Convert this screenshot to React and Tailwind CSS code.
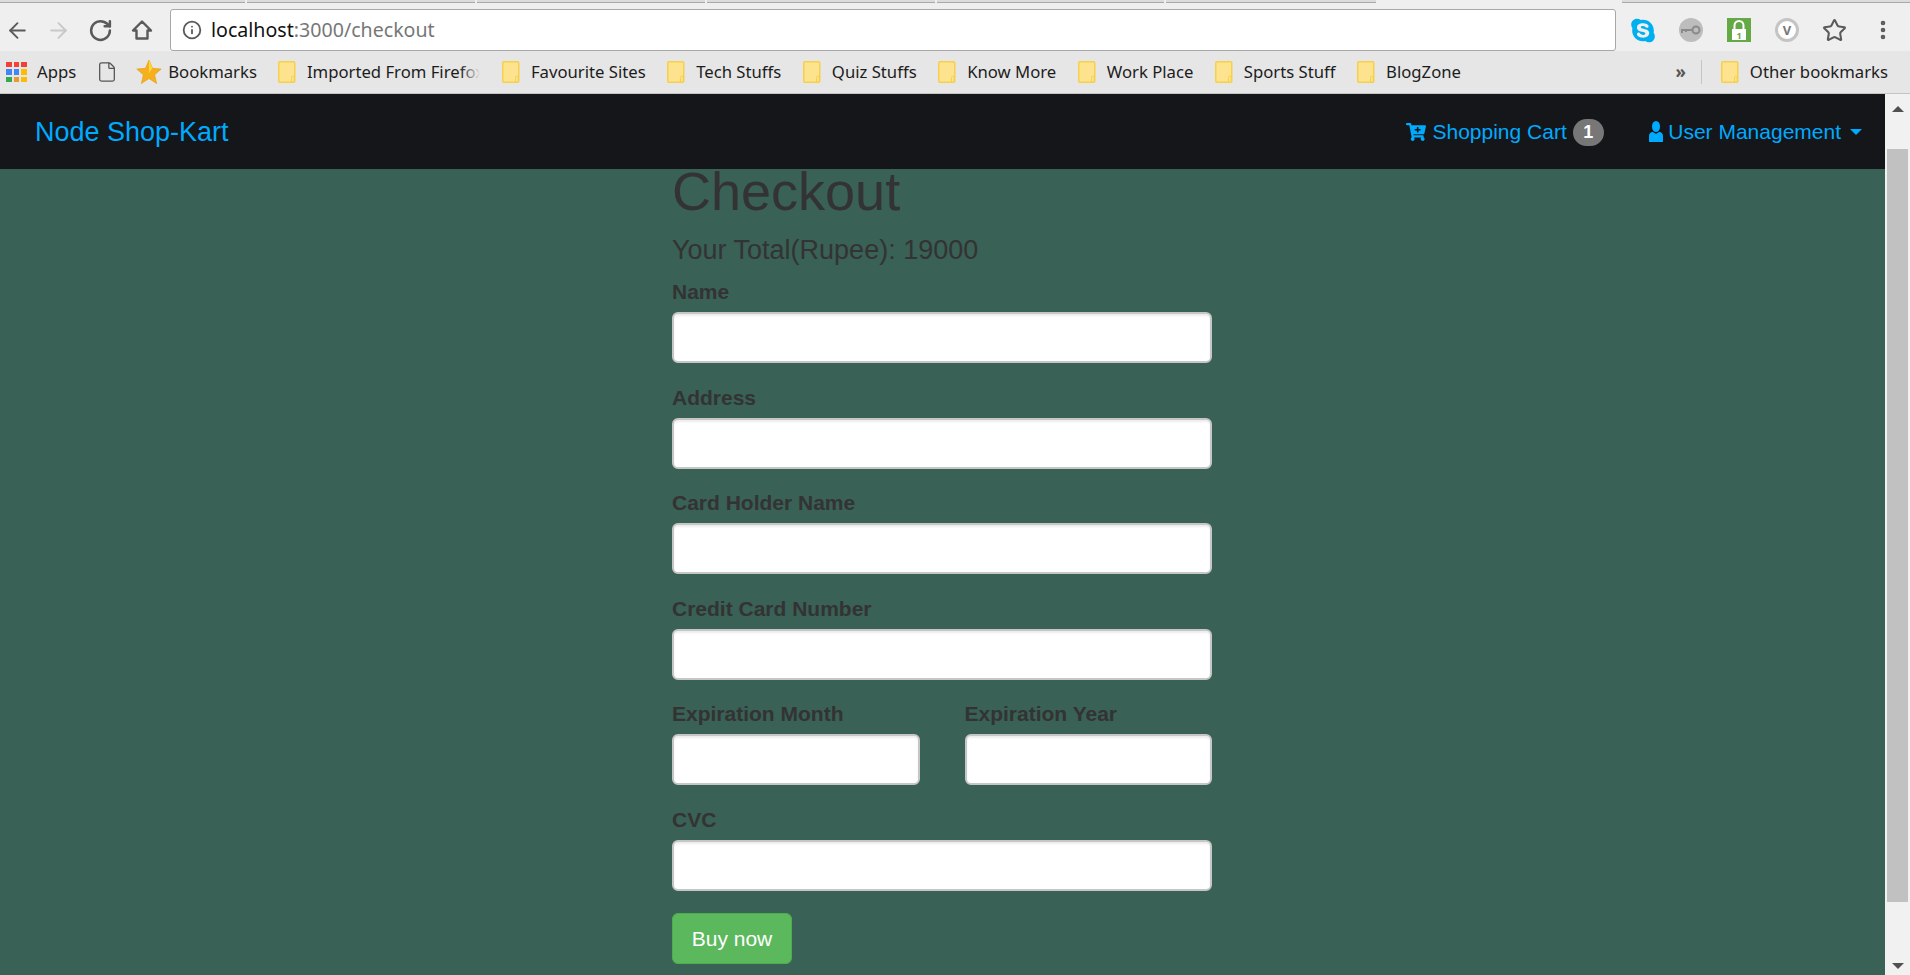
import { ArrowLeft, ArrowRight, RotateCw, Info, File, Star, EllipsisVertical } from 'lucide-react'
import { FaSkype, FaCartPlus } from 'react-icons/fa'

const chromeFont = { fontFamily: "'Noto Sans', sans-serif" }

const carpetas = ['Favourite Sites', 'Tech Stuffs', 'Quiz Stuffs', 'Know More', 'Work Place', 'Sports Stuff', 'BlogZone']

const colores = ['#ef4136', '#f44336', '#ef4136', '#4285f4', '#4285f4', '#fbbc05', '#34a853', '#ea9a2c', '#fbbc05']

function Carpeta() {
  return (
    <svg width="18" height="22" viewBox="0 0 18 22" className="shrink-0">
      <rect x="0.75" y="0.75" width="16" height="20.5" rx="1" fill="#fee38f" stroke="#f6d04d" strokeWidth="1.5" />
      <path d="M13.5 21v-4.5a1.2 1.2 0 0 1 2.6 0V21" fill="none" stroke="#f6d04d" strokeWidth="1" />
    </svg>
  )
}

function Marcador({ nombre }) {
  return (
    <div className="flex items-center gap-[11px]">
      <Carpeta />
      <span className="text-[16.7px] text-[#1c1c1c] whitespace-nowrap">{nombre}</span>
    </div>
  )
}

function Campo({ label, className }) {
  return (
    <div className={className}>
      <label className="block h-[30px] mb-[6px] pt-[1px] text-[21px] leading-[30px] font-bold text-[#333]">{label}</label>
      <input
        type="text"
        className="block w-full h-[51px] mb-[18.5px] bg-white border-2 border-[#c6c6c6] rounded-[6px] shadow-[inset_0_2px_2px_rgba(0,0,0,0.075)] outline-none"
      />
    </div>
  )
}

function BarraNavegador() {
  return (
    <div className="shrink-0 bg-[#e6e6e6]" style={chromeFont}>
      <div className="flex h-[3px] bg-[#efefef]">
        <div className="w-[245px] bg-[#dcdcdc] border-b border-[#a9a9a9]" />
        <div className="w-[2px]" />
        <div className="w-[228px] bg-[#dcdcdc] border-b border-[#a9a9a9]" />
        <div className="w-[2px]" />
        <div className="w-[228px] bg-[#dcdcdc] border-b border-[#a9a9a9]" />
        <div className="w-[2px]" />
        <div className="w-[228px] bg-[#dcdcdc] border-b border-[#a9a9a9]" />
        <div className="w-[2px]" />
        <div className="w-[227px] bg-[#dcdcdc] border-b border-[#a9a9a9]" />
        <div className="w-[2px]" />
        <div className="w-[210px] bg-[#dcdcdc] border-b border-[#a9a9a9]" />
        <div className="w-[246px]" />
        <div className="flex-1 bg-[#dcdcdc] border-b border-[#a9a9a9]" />
      </div>
      <div className="flex items-center h-[48px] pt-[6px] bg-[#efefef]">
        <div className="flex items-center w-[170px] pl-[5px]">
          <ArrowLeft size={25} strokeWidth={1.8} color="#5a5a5a" />
          <ArrowRight size={25} strokeWidth={1.8} color="#c8c8c8" className="ml-[16px]" />
          <RotateCw size={25} strokeWidth={2.4} color="#5a5a5a" className="ml-[17px]" />
          <svg width="24" height="24" viewBox="0 0 24 24" className="ml-[17px]">
            <path d="M12 3.5L3 12.5h3.5V20.5h11V12.5H21z" fill="none" stroke="#5a5a5a" strokeWidth="2.4" strokeLinejoin="round" />
          </svg>
        </div>
        <div className="flex items-center w-[1446px] h-[42px] bg-white border border-[#a8a8a8] rounded-[3px] pl-[11px]">
          <Info size={20} strokeWidth={2.2} color="#5a5a5a" />
          <span className="ml-[9px] text-[19.6px] text-[#111] leading-none">
            localhost<span className="text-[#777]">:3000/checkout</span>
          </span>
        </div>
        <div className="flex items-center flex-1">
          <div className="w-[24px] ml-[15px] flex justify-center">
            <FaSkype size={27} color="#00aff0" />
          </div>
          <div className="ml-[24px] w-[24px] h-[24px] rounded-full bg-[#bdbdbd] flex items-center justify-center">
            <svg width="20" height="10" viewBox="0 0 20 10">
              <circle cx="15" cy="5" r="3.5" fill="none" stroke="#8a8a8a" strokeWidth="2" />
              <path d="M11 5H1v3M5 5v2" fill="none" stroke="#8a8a8a" strokeWidth="2" />
            </svg>
          </div>
          <div className="ml-[24px] w-[24px] h-[24px] bg-[#63a945]">
            <svg width="24" height="24" viewBox="0 0 24 24">
              <path d="M7.5 12V7.5a4.5 4.5 0 0 1 9 0V12" fill="none" stroke="#fff" strokeWidth="2" />
              <rect x="5" y="11" width="14" height="11" fill="#fff" />
              <text x="12" y="20.5" textAnchor="middle" fontSize="9" fontWeight="bold" fill="#63a945">1</text>
            </svg>
          </div>
          <div className="ml-[24px] w-[24px] h-[24px] rounded-full border-[3px] border-[#c4c4c4] bg-white flex items-center justify-center text-[13px] leading-none text-[#777] font-bold">
            V
          </div>
          <Star size={25} strokeWidth={2} color="#5a5a5a" className="ml-[23px]" />
          <EllipsisVertical size={24} strokeWidth={2.6} color="#5a5a5a" className="ml-[24px]" />
        </div>
      </div>
      <div className="flex items-center h-[43px] border-b border-[#c4c4c4]">
        <div className="grid grid-cols-3 gap-[2px] w-[21px] ml-[6px]">
          {colores.map((c, i) => (
            <div key={i} className="h-[5.5px]" style={{ backgroundColor: c }} />
          ))}
        </div>
        <span className="ml-[10px] text-[16.7px] text-[#1c1c1c]">Apps</span>
        <File size={22} strokeWidth={1.4} color="#555" className="ml-[20px]" />
        <svg width="26" height="26" viewBox="0 0 24 24" className="ml-[18px]">
          <path d="M12 1l3.2 7.6 8 .7-6 5.3 1.8 8L12 18l-7 4.6 1.8-8-6-5.3 8-.7z" fill="#f6b01e" stroke="#e59a10" strokeWidth="0.6" />
          <path d="M12 1l3.2 7.6L12 13z" fill="#fdd835" />
        </svg>
        <span className="ml-[6px] text-[16.7px] text-[#1c1c1c]">Bookmarks</span>
        <div className="flex items-center gap-[11px] ml-[21px]">
          <Carpeta />
          <div className="relative w-[173px] overflow-hidden">
            <span className="text-[16.7px] text-[#1c1c1c] whitespace-nowrap">Imported From Firefox</span>
            <div className="absolute inset-y-0 right-0 w-[20px] bg-gradient-to-r from-transparent to-[#e6e6e6]" />
          </div>
        </div>
        <div className="flex items-center gap-[21.5px] ml-[22px]">
          {carpetas.map((c) => (
            <Marcador key={c} nombre={c} />
          ))}
        </div>
        <div className="flex items-center ml-auto">
          <span className="text-[17px] text-[#555] font-bold">»</span>
          <div className="w-px h-[24px] bg-[#c4c4c4] ml-[15px] mr-[19px]" />
          <Marcador nombre="Other bookmarks" />
          <div className="w-[22px]" />
        </div>
      </div>
    </div>
  )
}

function App() {
  return (
    <div className="h-[975px] w-full overflow-hidden flex flex-col">
      <BarraNavegador />
      <div className="flex flex-1 min-h-0" style={{ fontFamily: "'Liberation Sans', Arial, sans-serif" }}>
        <div className="flex-1 min-w-0 bg-[#396156] flex flex-col overflow-hidden">
          <nav className="shrink-0 h-[75px] bg-[#141619] flex items-center justify-between pl-[35px] pr-[23px] text-[#00aaff]">
            <a className="text-[27px] pt-[2px]">Node Shop-Kart</a>
            <div className="flex items-center text-[21px] pt-[1px]">
              <FaCartPlus size={20} />
              <span className="ml-[6px]">Shopping Cart</span>
              <span className="ml-[6px] w-[31px] h-[27px] rounded-full bg-[#777] text-white text-[18px] font-bold flex items-center justify-center">
                1
              </span>
              <svg width="14" height="22" viewBox="0 0 16 22" preserveAspectRatio="none" className="ml-[45px]" fill="#00aaff">
                <ellipse cx="8" cy="5.5" rx="4.6" ry="5.5" />
                <path d="M0 21v-6c0-2.5 2-3.8 4.5-4.2C5.5 12 6.7 12.6 8 12.6s2.5-.6 3.5-1.8c2.5.4 4.5 1.7 4.5 4.2v6z" />
              </svg>
              <span className="ml-[5.5px]">User Management</span>
              <span className="ml-[9px] w-0 h-0 border-x-[6px] border-x-transparent border-t-[6px] border-t-[#00aaff]" />
            </div>
          </nav>
          <main className="ml-[672px] w-[540px] text-[#333]">
            <h1 className="-mt-[7px] text-[54px] leading-[59.4px]">Checkout</h1>
            <h3 className="mt-[9px] mb-[6px] text-[27px] leading-[40px]">Your Total(Rupee): 19000</h3>
            <form>
              <Campo label="Name" />
              <Campo label="Address" />
              <Campo label="Card Holder Name" />
              <Campo label="Credit Card Number" />
              <div className="grid grid-cols-2 gap-[45px]">
                <Campo label="Expiration Month" />
                <Campo label="Expiration Year" />
              </div>
              <Campo label="CVC" />
              <button
                type="button"
                className="block w-[120px] h-[51px] mt-[22px] bg-[#5cb85c] border-[1.5px] border-[#4cae4c] rounded-[6px] text-white text-[21px]"
              >
                Buy now
              </button>
            </form>
          </main>
        </div>
        <div className="w-[25px] shrink-0 bg-[#f1f1f1] flex flex-col items-center">
          <div className="h-[55px] flex items-center justify-center pb-[30px] pt-[4px]">
            <div className="w-0 h-0 border-x-[6px] border-x-transparent border-b-[6px] border-b-[#505050]" />
          </div>
          <div className="w-[21px] h-[753px] bg-[#c1c1c1]" />
          <div className="flex-1 flex items-end pb-[6px]">
            <div className="w-0 h-0 border-x-[6px] border-x-transparent border-t-[6px] border-t-[#505050]" />
          </div>
        </div>
      </div>
    </div>
  )
}

export default App
